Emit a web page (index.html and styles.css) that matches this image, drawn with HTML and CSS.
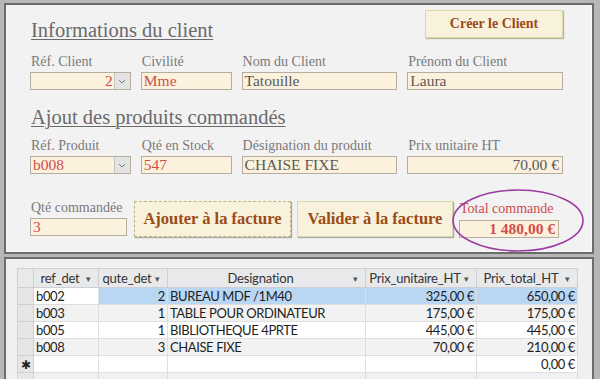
FILE: index.html
```html
<!DOCTYPE html>
<html lang="fr">
<head>
<meta charset="utf-8">
<title>Facture</title>
<link rel="stylesheet" href="styles.css">
</head>
<body>
<div class="screen">
  <section class="form">
    <div class="head">
      <h1 class="title">Informations du client</h1>
      <button class="btn btn-create">Créer le Client</button>
    </div>
    <div class="row row-a">
      <div class="fld w1"><span class="lbl">Réf. Client</span><div class="box combo red right"><span class="val">2</span><span class="drop"><svg viewBox="0 0 8 5" width="8" height="5"><path d="M1 1l3 3 3-3" fill="none" stroke="#777" stroke-width="1"/></svg></span></div></div>
      <div class="fld w2"><span class="lbl">Civilité</span><div class="box red">Mme</div></div>
      <div class="fld w3"><span class="lbl">Nom du Client</span><div class="box">Tatouille</div></div>
      <div class="fld w3"><span class="lbl">Prénom du Client</span><div class="box">Laura</div></div>
    </div>
    <h2 class="title t2">Ajout des produits commandés</h2>
    <div class="row row-b">
      <div class="fld w1"><span class="lbl">Réf. Produit</span><div class="box combo red"><span class="val">b008</span><span class="drop"><svg viewBox="0 0 8 5" width="8" height="5"><path d="M1 1l3 3 3-3" fill="none" stroke="#777" stroke-width="1"/></svg></span></div></div>
      <div class="fld w2"><span class="lbl">Qté en Stock</span><div class="box red">547</div></div>
      <div class="fld w3"><span class="lbl">Désignation du produit</span><div class="box">CHAISE FIXE</div></div>
      <div class="fld w3"><span class="lbl">Prix unitaire HT</span><div class="box right">70,00 €</div></div>
    </div>
    <div class="row row-c">
      <div class="fld w4"><span class="lbl">Qté commandée</span><div class="box red">3</div></div>
      <button class="btn btn-big btn-add">Ajouter à la facture</button>
      <button class="btn btn-big btn-val">Valider à la facture</button>
      <div class="fld w5 total"><span class="lbl red">Total commande</span><div class="box red right bold">1 480,00 €</div>
        <svg class="ring" viewBox="0 0 132 63" width="132" height="63"><ellipse cx="66" cy="31.5" rx="65" ry="30.5" fill="none" stroke="#9a3ca0" stroke-width="1.6"/></svg>
      </div>
    </div>
  </section>
  <section class="sheet">
    <table class="grid">
      <colgroup><col class="c0"><col class="c1"><col class="c2"><col class="c3"><col class="c4"><col class="c5"></colgroup>
      <thead>
        <tr>
          <th class="sel"></th>
          <th><div class="hd"><span>ref_det</span><i>▾</i></div></th>
          <th><div class="hd"><span>qute_det</span><i>▾</i></div></th>
          <th><div class="hd"><span>Designation</span><i>▾</i></div></th>
          <th><div class="hd"><span>Prix_unitaire_HT</span><i>▾</i></div></th>
          <th><div class="hd"><span>Prix_total_HT</span><i>▾</i></div></th>
        </tr>
      </thead>
      <tbody>
        <tr class="cur"><td class="sel"></td><td class="edit">b002</td><td class="num">2</td><td>BUREAU MDF /1M40</td><td class="num">325,00 €</td><td class="num">650,00 €</td></tr>
        <tr class="alt"><td class="sel"></td><td>b003</td><td class="num">1</td><td>TABLE POUR ORDINATEUR</td><td class="num">175,00 €</td><td class="num">175,00 €</td></tr>
        <tr><td class="sel"></td><td>b005</td><td class="num">1</td><td>BIBLIOTHEQUE 4PRTE</td><td class="num">445,00 €</td><td class="num">445,00 €</td></tr>
        <tr class="alt"><td class="sel"></td><td>b008</td><td class="num">3</td><td>CHAISE FIXE</td><td class="num">70,00 €</td><td class="num">210,00 €</td></tr>
        <tr><td class="sel star">✱</td><td></td><td class="num"></td><td></td><td class="num"></td><td class="num">0,00 €</td></tr>
        <tr class="blank"><td class="sel"></td><td></td><td></td><td></td><td></td><td></td></tr>
      </tbody>
    </table>
  </section>
</div>
</body>
</html>
```
FILE: styles.css
```css
* { box-sizing: border-box; }
html, body { margin: 0; padding: 0; }
body {
  width: 600px;
  height: 379px;
  overflow: hidden;
  background: #b7b7b7;
  font-family: "Liberation Serif", "Times New Roman", serif;
}
.screen {
  padding: 3px 6px 0 4px;
}
.form {
  height: 251px;
  border: 2px solid #6c6c6c;
  background: #f2f2f2;
  padding: 5px 29px 0 24px;
  box-shadow: inset -1px -1px 0 #fafafa;
}
.head {
  display: flex;
  justify-content: space-between;
  align-items: flex-start;
}
.title {
  margin: 9px 0 0 1px;
  font-size: 20.5px;
  line-height: 23px;
  font-weight: normal;
  color: #6a6a6a;
  text-decoration: underline;
  text-decoration-thickness: 1px;
  text-underline-offset: 2px;
}
.t2 { margin-top: 16px; }
.btn {
  font-family: "Liberation Serif", "Times New Roman", serif;
  background: #f8f1dc;
  color: #9b4c16;
  font-weight: bold;
  padding: 0;
  cursor: default;
}
.btn-create {
  width: 138px;
  height: 28px;
  font-size: 14px;
  border: 1px solid #d8d8a8;
  box-shadow: 1px 1px 1px #b8b8a0;
}
.row {
  display: flex;
  gap: 10px;
}
.row-a { margin-top: 12px; }
.row-b { margin-top: 9px; }
.row-c { margin-top: 26px; gap: 0; align-items: flex-start; }
.fld {
  display: flex;
  flex-direction: column;
  gap: 2px;
}
.w1 { width: 101px; }
.w2 { width: 91px; }
.w3 { width: 156px; }
.w4 { width: 97px; }
.w5 { width: 100px; }
.lbl {
  font-size: 14px;
  line-height: 16px;
  color: #797979;
  padding-left: 1px;
  white-space: nowrap;
}
.lbl.red { color: #cf4b4b; }
.box {
  height: 18px;
  background: #fbf1dc;
  border: 1px solid #b4ada0;
  font-size: 15.5px;
  line-height: 16px;
  color: #5a5a5a;
  padding: 0 3px 0 2px;
  white-space: nowrap;
  overflow: hidden;
}
.box.red { color: #cf4f4b; }
.box.right { text-align: right; }
.box.bold { font-weight: bold; }
.combo {
  display: flex;
  padding-right: 0;
}
.combo .val { flex: 1; }
.combo.right .val { text-align: right; padding-right: 1px; }
.drop {
  width: 16px;
  background: #e3e3e3;
  border-left: 1px solid #c4c4c4;
  display: flex;
  align-items: center;
  justify-content: center;
}
.btn-big {
  height: 36px;
  font-size: 16.5px;
  margin-top: 1px;
}
.btn-add {
  width: 157px;
  margin-left: 7px;
  border: 1px dashed #b9b77c;
  box-shadow: 1px 1px 1px #a9a9a0;
}
.btn-val {
  width: 156px;
  margin-left: 6px;
  border: 1px solid #d9d9b0;
  box-shadow: 1px 1px 1px #a9a9a0;
}
.total {
  margin-left: 6px;
  position: relative;
  gap: 3px;
}
.total .lbl { margin-top: 1px; }
.ring {
  position: absolute;
  left: -7px;
  top: -11px;
}
.sheet {
  margin-top: 3px;
  height: 130px;
  border: 2px solid #6c6c6c;
  border-bottom: none;
  background: #f0f0f0;
  padding: 9px 0 0 11px;
}
.grid {
  border-collapse: collapse;
  table-layout: fixed;
  width: 560px;
  font-family: Lato, "Open Sans", sans-serif;
  font-size: 13px;
  color: #1e1e1e;
}
.c0 { width: 16px; }
.c1 { width: 65px; }
.c2 { width: 69px; }
.c3 { width: 198px; }
.c4 { width: 111px; }
.c5 { width: 101px; }
.grid th {
  height: 19px;
  padding: 0;
  background: #e8e9eb;
  border: 1px solid #cdcfd2;
  font-weight: normal;
  font-size: 13px;
  letter-spacing: -0.2px;
  color: #333;
}
.hd {
  display: flex;
  align-items: center;
}
.hd span { flex: 1; text-align: center; white-space: nowrap; }
.hd i {
  width: 12px;
  font-style: normal;
  font-size: 9px;
  color: #555;
  text-align: left;
}
.grid td {
  height: 17px;
  padding: 0 2px 0 2px;
  border: 1px solid #dedede;
  background: #fff;
  white-space: nowrap;
  overflow: hidden;
  line-height: 15px;
  letter-spacing: -0.4px;
}
.grid tr.alt td { background: #f2f2f2; }
.grid tr.cur td { background: #b9d7f3; }
.grid tr.cur td.edit { background: #fff; }
.grid td.sel {
  background: #e6e6e6 !important;
  border-color: #d0d0d0;
  padding: 0;
  text-align: center;
}
.grid td.star { font-size: 12px; color: #222; letter-spacing: 0; }
.grid td.num { text-align: right; }
.grid tr.blank td { background: #eef0f3; }
```
